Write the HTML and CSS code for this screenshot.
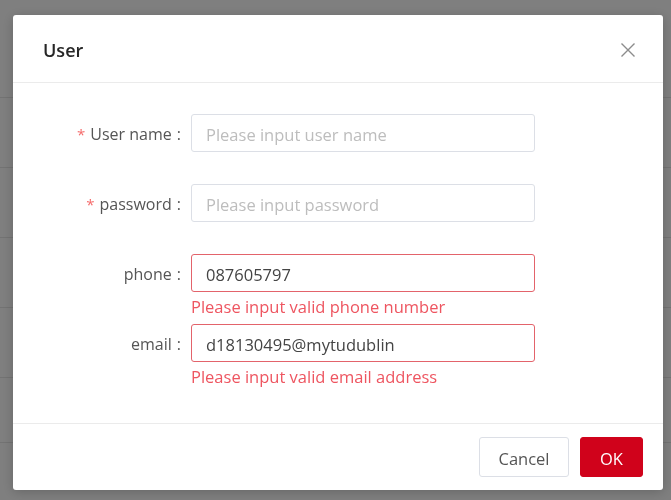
FILE: index.html
```html
<!DOCTYPE html>
<html lang="en">
<head>
<meta charset="utf-8">
<title>User</title>
<link rel="stylesheet" href="styles.css">
</head>
<body>
<div class="page">
  <div class="page-row r1"></div>
  <div class="page-row r2"></div>
  <div class="page-row r3"></div>
  <div class="page-row r4"></div>
  <div class="page-row r5"></div>
  <div class="page-row r6"></div>
</div>
<div class="mask">
  <div class="modal">
    <div class="modal-header">
      <span class="modal-title">User</span>
      <button class="modal-close" type="button" aria-label="Close">
        <svg width="16" height="16" viewBox="0 0 16 16"><path d="M1.5 1.5 L14.5 14.5 M14.5 1.5 L1.5 14.5" stroke="#8c8c8c" stroke-width="1.4" fill="none"/></svg>
      </button>
    </div>
    <div class="modal-body">
      <form class="form">
        <div class="form-item">
          <label class="form-label"><span class="req">*</span>User name<span class="colon">:</span></label>
          <div class="form-control"><input class="input" type="text" placeholder="Please input user name"></div>
        </div>
        <div class="form-item">
          <label class="form-label"><span class="req">*</span>password<span class="colon">:</span></label>
          <div class="form-control"><input class="input" type="password" placeholder="Please input password"></div>
        </div>
        <div class="form-item">
          <label class="form-label">phone<span class="colon">:</span></label>
          <div class="form-control">
            <input class="input is-error" type="text" value="087605797">
            <div class="form-error">Please input valid phone number</div>
          </div>
        </div>
        <div class="form-item">
          <label class="form-label">email<span class="colon">:</span></label>
          <div class="form-control">
            <input class="input is-error" type="text" value="d18130495@mytudublin">
            <div class="form-error">Please input valid email address</div>
          </div>
        </div>
      </form>
    </div>
    <div class="modal-footer">
      <button class="btn btn-default" type="button">Cancel</button>
      <button class="btn btn-primary" type="button">OK</button>
    </div>
  </div>
</div>
</body>
</html>
```
FILE: styles.css
```css
* { box-sizing: border-box; }
html, body { margin: 0; padding: 0; }
body {
  width: 671px;
  height: 500px;
  overflow: hidden;
  background: #fff;
  font-family: "Open Sans", "Noto Sans", "Liberation Sans", sans-serif;
}
.page { display: flex; flex-direction: column; }
.page-row { border-bottom: 1px solid #e6e6e6; }
.r1 { height: 98px; }
.r2 { height: 70px; }
.r3 { height: 70px; }
.r4 { height: 70px; }
.r5 { height: 70px; }
.r6 { height: 65px; }

.mask {
  position: fixed;
  inset: 0;
  background: rgba(0, 0, 0, 0.5);
  padding: 15px 0 0 13px;
}
.modal {
  width: 650px;
  height: 475px;
  background: #fff;
  border-radius: 3px;
  box-shadow: 0 2px 12px rgba(0, 0, 0, 0.2);
  display: flex;
  flex-direction: column;
}
.modal-header {
  height: 68px;
  border-bottom: 1px solid #ebebeb;
  display: flex;
  align-items: center;
  justify-content: space-between;
  padding: 2px 25px 0 30px;
}
.modal-title {
  font-size: 18px;
  font-weight: 600;
  color: #262626;
}
.modal-close {
  border: 0;
  background: none;
  padding: 0;
  width: 20px;
  height: 20px;
  display: flex;
  align-items: center;
  justify-content: center;
}
.modal-body {
  flex: 1;
  padding: 31px 0 29px;
}
.form-item {
  display: flex;
  height: 70px;
}
.form-label {
  width: 178px;
  padding: 1px 10px 0 0;
  height: 38px;
  display: flex;
  align-items: center;
  justify-content: flex-end;
  font-size: 16px;
  color: #555;
}
.req {
  color: #f56c6c;
  margin-right: 5px;
  font-size: 15px;
}
.colon { margin-left: 5px; }
.form-control { width: 344px; }
.input {
  display: block;
  width: 344px;
  height: 38px;
  border: 1px solid #dcdfe6;
  border-radius: 3px;
  padding: 2px 14px 0;
  font-family: inherit;
  font-size: 16.5px;
  color: #444;
  outline: none;
  background: #fff;
}
.input::placeholder { color: #bdbdbd; }
.input.is-error { border-color: #e3636b; }
.form-error {
  color: #ee5560;
  font-size: 16.5px;
  line-height: 30px;
}
.modal-footer {
  height: 67px;
  border-top: 1px solid #ebebeb;
  display: flex;
  align-items: center;
  justify-content: flex-end;
  gap: 11px;
  padding: 0 20px 0 0;
}
.btn {
  height: 40px;
  border-radius: 3px;
  font-family: inherit;
  font-size: 16.5px;
  padding: 3px 0 0;
}
.btn-default {
  width: 90px;
  border: 1px solid #dcdfe6;
  background: #fff;
  color: #555;
}
.btn-primary {
  width: 63px;
  border: 1px solid #d0021b;
  background: #d0021b;
  color: #fff;
}
```
